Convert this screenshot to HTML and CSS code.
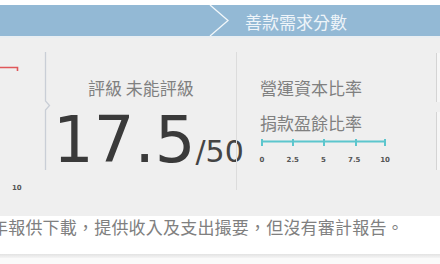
FILE: index.html
```html
<!DOCTYPE html>
<html lang="zh-Hant">

<head>
  <meta charset="UTF-8">
  <meta name="viewport" content="width=device-width, initial-scale=1.0">
  <title>善款需求分數</title>
  <link rel="stylesheet" href="styles.css">
</head>

<body>
  <div class="top"></div>
  <div class="header">
    <svg class="chev" width="22" height="31" viewBox="0 0 22 31">
      <path d="M2 0 L20 15.5 L2 31" fill="none" stroke="#f2f7fa" stroke-width="1.3" />
    </svg>
    <span class="title">善款需求分數</span>
  </div>
  <div class="panel">
    <div class="prev">
      <svg class="redmark" width="20" height="8" viewBox="0 0 20 8">
        <path d="M0 1.5 H17.5 V5" fill="none" stroke="#e0575a" stroke-width="1.6" />
      </svg>
      <div class="prevlabel">10</div>
    </div>
    <svg class="brace" width="8" height="118" viewBox="0 0 8 118">
      <path d="M1.5 0 V49 L5.5 53.5 L1.5 58 V118" fill="none" stroke="#c9ced6" stroke-width="1.3" />
    </svg>
    <div class="score">
      <div class="grade">評級 未能評級</div>
      <div class="big">17.5<span class="total">/50</span></div>
    </div>
    <div class="divider"></div>
    <div class="ratios">
      <div class="ratio">營運資本比率</div>
      <div class="ratio">捐款盈餘比率</div>
      <svg class="scale" width="127" height="10" viewBox="0 0 127 10">
        <path d="M2 4.5 H125" stroke="#5cc6cd" stroke-width="2" />
        <path d="M2 2 V9 M33 2 V9 M64 2 V9 M96 2 V9 M125 2 V9" stroke="#5cc6cd" stroke-width="2" />
      </svg>
      <div class="ticks">
        <span>0</span><span>2.5</span><span>5</span><span>7.5</span><span>10</span>
      </div>
    </div>
    <div class="side">
      <div class="sidebox one"></div>
      <div class="sidebox two"></div>
    </div>
  </div>
  <div class="note">年報供下載，提供收入及支出撮要，但沒有審計報告。</div>
  <div class="shade"></div>
</body>

</html>
```

FILE: styles.css
```css
body {
  margin: 0;
  width: 440px;
  height: 264px;
  overflow: hidden;
  background: #fafafa;
  font-family: "Noto Sans CJK TC", "Noto Sans", sans-serif;
}

.top {
  height: 5px;
  background: #ffffff;
}

.header {
  display: flex;
  align-items: center;
  height: 31px;
  padding-left: 208px;
  background: #93b9d5;
}

.chev {
  display: block;
}

.title {
  margin-left: 15px;
  margin-top: 3px;
  font-size: 17px;
  line-height: 20px;
  color: #eef4f9;
}

.panel {
  display: flex;
  height: 178px;
  border-top: 2px solid #e9eef2;
  background: #efefef;
}

.prev {
  width: 44px;
  display: flex;
  flex-direction: column;
}

.redmark {
  display: block;
  margin-top: 28px;
}

.prevlabel {
  margin-top: 110px;
  margin-left: 12px;
  font-family: "DejaVu Sans", sans-serif;
  font-size: 7px;
  font-weight: bold;
  color: #555;
}

.brace {
  display: block;
  margin-top: 14px;
}

.score {
  width: 184px;
  display: flex;
  flex-direction: column;
}

.grade {
  margin-top: 40px;
  padding-left: 36px;
  font-size: 17px;
  line-height: 20px;
  color: #808080;
}

.big {
  margin-top: 10px;
  margin-left: 1px;
  font-family: "DejaVu Sans", sans-serif;
  font-size: 64px;
  line-height: 64px;
  color: #3a3a3a;
  white-space: nowrap;
}

.total {
  font-size: 30px;
  color: #444;
}

.divider {
  width: 1px;
  height: 138px;
  margin-top: 14px;
  background: #dcdcdc;
}

.ratios {
  width: 199px;
  display: flex;
  flex-direction: column;
  padding-left: 23px;
  box-sizing: border-box;
}

.ratio {
  font-size: 17px;
  line-height: 20px;
  color: #808080;
}

.ratio:first-child {
  margin-top: 40px;
}

.ratio + .ratio {
  margin-top: 15px;
}

.scale {
  display: block;
  margin-top: 4px;
}

.ticks {
  display: flex;
  justify-content: space-between;
  width: 143px;
  margin-left: -8px;
  margin-top: 9px;
}

.ticks span {
  width: 20px;
  text-align: center;
  font-family: "DejaVu Sans", sans-serif;
  font-size: 7px;
  font-weight: bold;
  color: #555;
}

.side {
  width: 4px;
  display: flex;
  flex-direction: column;
}

.sidebox {
  border-left: 1px solid #d4d4d4;
  background: #f6f6f6;
}

.sidebox.one {
  margin-top: 15px;
  height: 49px;
}

.sidebox.two {
  margin-top: 10px;
  height: 58px;
}

.note {
  height: 38px;
  margin-left: -9px;
  background: #ffffff;
  font-size: 17px;
  line-height: 22px;
  letter-spacing: 0.2px;
  color: #808080;
  white-space: nowrap;
}

.shade {
  height: 4px;
  background: linear-gradient(#e2e2e2, #f4f4f4);
}
```
